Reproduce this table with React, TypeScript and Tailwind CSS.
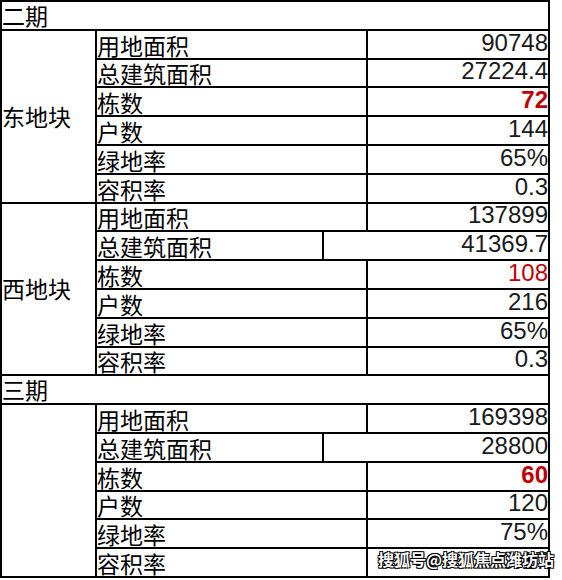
import React from "react";

type Row = { label: string; value: string; red?: boolean; bold?: boolean; split?: boolean };
type Block = { cat: string; rows: Row[] };
type Section = { title: string; blocks: Block[] };

const sections: Section[] = [
  {
    title: "二期",
    blocks: [
      {
        cat: "东地块",
        rows: [
          { label: "用地面积", value: "90748" },
          { label: "总建筑面积", value: "27224.4" },
          { label: "栋数", value: "72", red: true, bold: true },
          { label: "户数", value: "144" },
          { label: "绿地率", value: "65%" },
          { label: "容积率", value: "0.3" },
        ],
      },
      {
        cat: "西地块",
        rows: [
          { label: "用地面积", value: "137899" },
          { label: "总建筑面积", value: "41369.7", split: true },
          { label: "栋数", value: "108", red: true },
          { label: "户数", value: "216" },
          { label: "绿地率", value: "65%" },
          { label: "容积率", value: "0.3" },
        ],
      },
    ],
  },
  {
    title: "三期",
    blocks: [
      {
        cat: "",
        rows: [
          { label: "用地面积", value: "169398" },
          { label: "总建筑面积", value: "28800", split: true },
          { label: "栋数", value: "60", red: true, bold: true },
          { label: "户数", value: "120" },
          { label: "绿地率", value: "75%" },
          { label: "容积率", value: "0.17" },
        ],
      },
    ],
  },
];

const cjk = "font-['Noto_Sans_CJK_SC','Noto_Sans',sans-serif]";
const num = "font-['Liberation_Sans',Arial,sans-serif]";

export default function App() {
  return (
    <div className="bg-white w-[562px] h-[580px] relative">
      <div className="grid grid-cols-[93px_225px_42px_180px] grid-rows-[repeat(20,26.8px)] gap-[2px] p-[2px] bg-black w-[550px]">
        {sections.map((s) => (
          <React.Fragment key={s.title}>
            <div
              className={`col-span-4 col-start-1 bg-white flex items-end overflow-hidden text-[23px] leading-none text-black ${cjk}`}
            >
              <span className="pb-[2px]">{s.title}</span>
            </div>
            {s.blocks.map((b, bi) => (
              <React.Fragment key={bi}>
                <div
                  className={`col-start-1 row-span-6 bg-white flex items-center text-[23px] leading-none text-black ${cjk}`}
                >
                  {b.cat}
                </div>
                {b.rows.map((r, ri) => (
                  <React.Fragment key={ri}>
                    <div
                      className={`${r.split ? "col-start-2 col-span-1" : "col-start-2 col-span-2"} bg-white flex items-end overflow-hidden text-[23px] leading-none text-black whitespace-nowrap ${cjk}`}
                    >
                      <span className="pb-[1px]">{r.label}</span>
                    </div>
                    <div
                      className={`${r.split ? "col-start-3 col-span-2" : "col-start-4 col-span-1"} bg-white flex items-end justify-end overflow-visible text-[24px] leading-none whitespace-nowrap ${num} ${
                        r.red ? "text-[#c00000]" : "text-[#1a1a1a]"
                      } ${r.bold ? "font-bold" : "font-normal"}`}
                    >
                      <span className="pb-[3px]">{r.value}</span>
                    </div>
                  </React.Fragment>
                ))}
              </React.Fragment>
            ))}
          </React.Fragment>
        ))}
      </div>
      <div
        className={`absolute left-[378px] top-[551px] text-[16px] font-bold leading-none text-white whitespace-nowrap ${cjk} [text-shadow:-1px_-1px_0_#000,1px_-1px_0_#000,-1px_1px_0_#000,1px_1px_0_#000]`}
      >
        搜狐号@搜狐焦点潍坊站
      </div>
    </div>
  );
}
